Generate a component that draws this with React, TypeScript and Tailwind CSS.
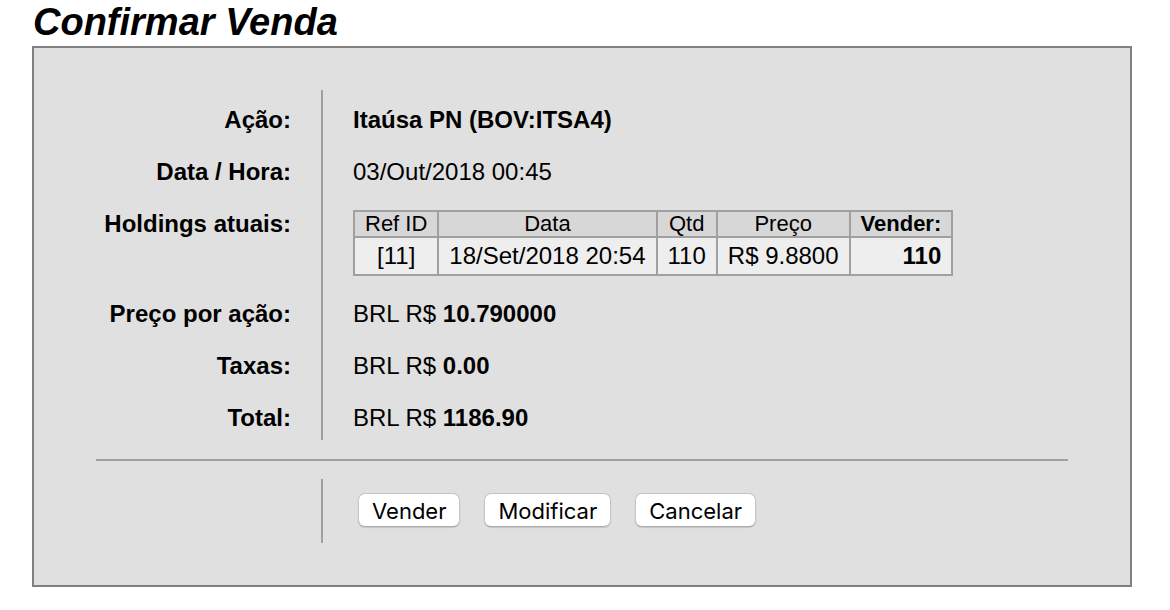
import type { ReactNode } from "react";

type RowProps = { label: string; children: ReactNode };

function Row({ label, children }: RowProps) {
  return (
    <div className="group grid grid-cols-[225px_1fr]">
      <dt className="py-3 pr-[30px] text-right font-bold group-first:pt-4 group-last:pb-2">{label}</dt>
      <dd className="border-l-2 border-[#a0a0a0] py-3 pl-[30px] group-first:pt-4 group-last:pb-2">
        {children}
      </dd>
    </div>
  );
}

function Money({ amount }: { amount: string }) {
  return (
    <>
      BRL R$ <b>{amount}</b>
    </>
  );
}

function ActionButton({ type = "button", children }: { type?: "button" | "submit"; children: string }) {
  return (
    <button
      type={type}
      className="h-[34px] rounded-[7px] border border-[#c4c4c4] border-b-[#adadad] bg-white px-[13px] pt-[2px] font-['Inter','Roboto',sans-serif] text-[22px] leading-[30px] shadow-[0_1px_1px_rgba(0,0,0,0.12)]"
    >
      {children}
    </button>
  );
}

const headCell = "border-2 border-[#a0a0a0] px-[10px] text-[22px] leading-6";
const bodyCell = "border-2 border-[#a0a0a0] px-[10px] leading-9";

export default function App() {
  return (
    <main className="bg-white px-8 pb-6 font-['Liberation_Sans',Arial,sans-serif] text-2xl leading-7 text-black">
      <h1 className="pb-1 pl-px pt-[2px] text-[38px] leading-10 font-bold italic">Confirmar Venda</h1>
      <form
        className="mr-[6px] border-2 border-[#808080] bg-[#e0e0e0] px-[62px] pt-[42px] pb-[42px]"
        onSubmit={(e) => e.preventDefault()}
      >
        <dl>
          <Row label="Ação:">
            <b>Itaúsa PN (BOV:ITSA4)</b>
          </Row>
          <Row label="Data / Hora:">03/Out/2018 00:45</Row>
          <Row label="Holdings atuais:">
            <table className="border-collapse text-center whitespace-nowrap">
              <thead className="bg-[#d7d7d7]">
                <tr>
                  <th className={`${headCell} font-normal`}>Ref ID</th>
                  <th className={`${headCell} font-normal`}>Data</th>
                  <th className={`${headCell} font-normal`}>Qtd</th>
                  <th className={`${headCell} font-normal`}>Preço</th>
                  <th className={`${headCell} font-bold`}>Vender:</th>
                </tr>
              </thead>
              <tbody className="bg-[#eeeeee]">
                <tr>
                  <td className={bodyCell}>[11]</td>
                  <td className={bodyCell}>18/Set/2018 20:54</td>
                  <td className={bodyCell}>110</td>
                  <td className={bodyCell}>R$ 9.8800</td>
                  <td className={`${bodyCell} text-right font-bold`}>110</td>
                </tr>
              </tbody>
            </table>
          </Row>
          <Row label="Preço por ação:">
            <Money amount="10.790000" />
          </Row>
          <Row label="Taxas:">
            <Money amount="0.00" />
          </Row>
          <Row label="Total:">
            <Money amount="1186.90" />
          </Row>
        </dl>
        <hr className="mt-[19px] mb-[18px] border-t-2 border-[#a0a0a0]" />
        <div className="ml-[225px] flex flex-wrap gap-6 border-l-2 border-[#a0a0a0] pt-[14px] pb-4 pl-[35px]">
          <ActionButton type="submit">Vender</ActionButton>
          <ActionButton>Modificar</ActionButton>
          <ActionButton>Cancelar</ActionButton>
        </div>
      </form>
    </main>
  );
}
